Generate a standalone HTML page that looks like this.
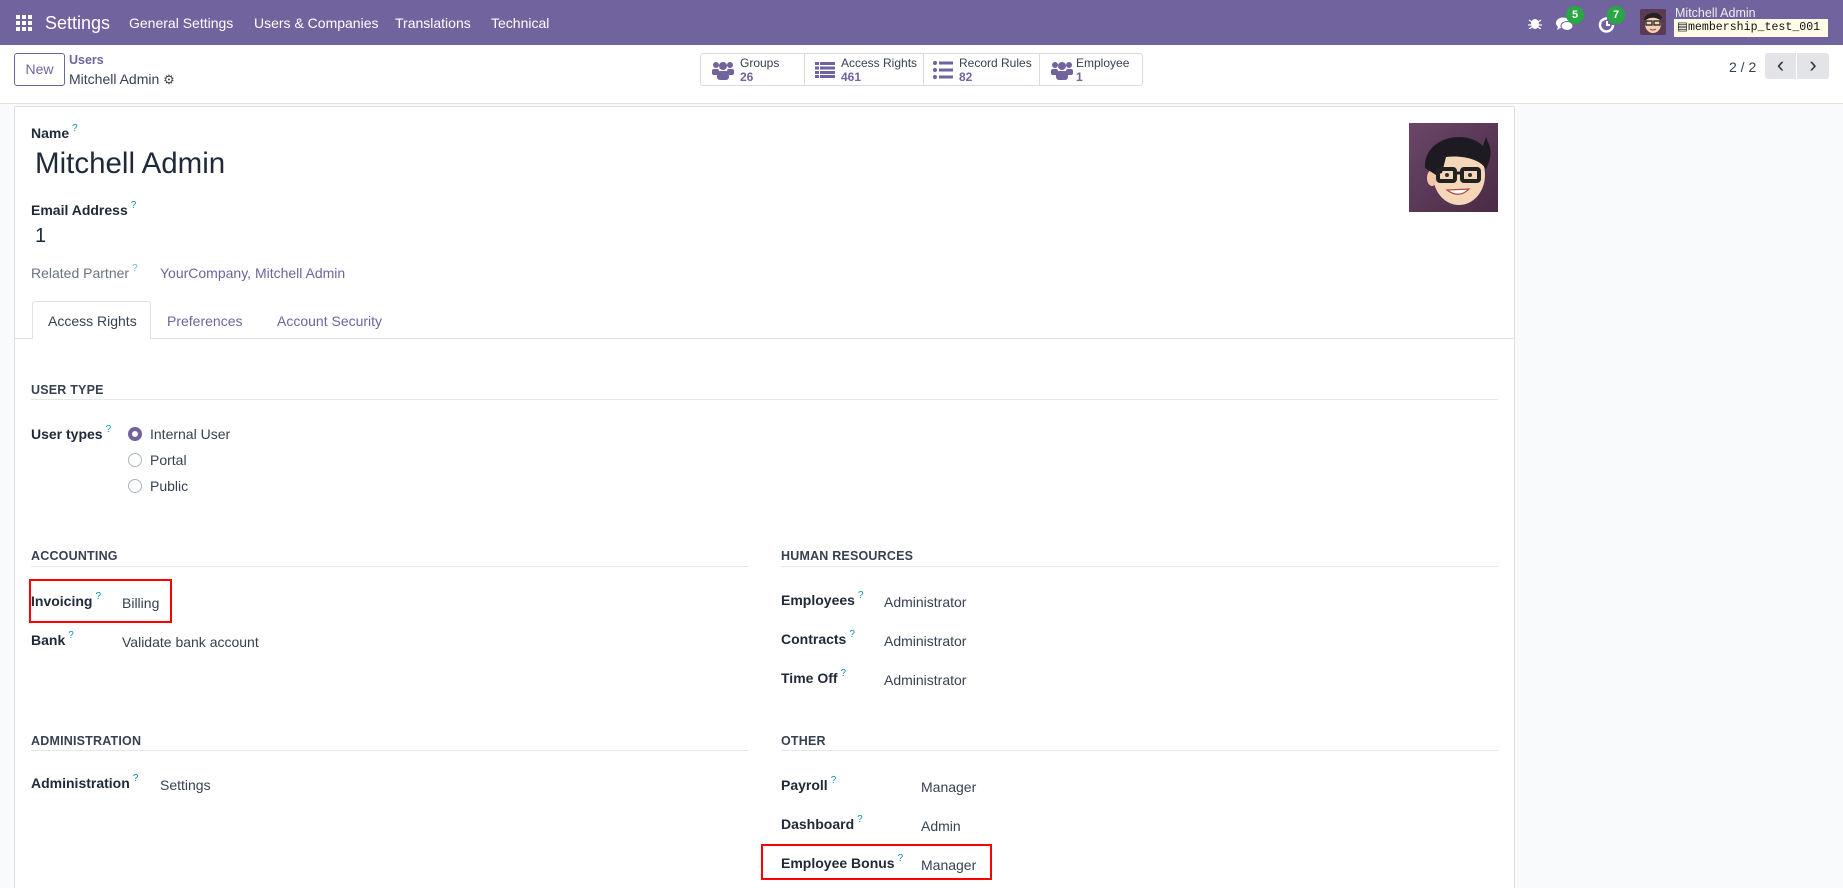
<!DOCTYPE html>
<html><head><meta charset="utf-8"><style>
*{margin:0;padding:0;box-sizing:border-box}
html,body{width:1843px;height:888px;overflow:hidden}
body{background:#f9fafb;font-family:"Liberation Sans",sans-serif;color:#374151;position:relative;font-size:14px}
.a{position:absolute;white-space:nowrap;line-height:20px;height:20px}
.nav{position:absolute;left:0;top:0;width:1843px;height:45px;background:#71639e}
.nav .a{color:#fff}
.cp{position:absolute;left:0;top:45px;width:1843px;height:59px;background:#fff;border-bottom:1px solid #dee2e6}
.sheet{position:absolute;left:14px;top:106px;width:1501px;height:800px;background:#fff;border:1px solid #dee2e6}
.lbl{font-weight:bold;color:#1f2937;font-size:14px}
.q{color:#0d8fb0;font-size:10px;vertical-align:top;position:relative;top:-4px;margin-left:3px;font-weight:normal}
.val{color:#374151;font-size:14px}
.hdr{font-weight:bold;font-size:12.5px;color:#374151;letter-spacing:.2px}
.line{position:absolute;height:1px;background:#e5e7eb}
.radio{position:absolute;width:14px;height:14px;border-radius:50%;border:1px solid #adb5bd;background:#fff}
.red{position:absolute;border:2px solid #f00}
.stat{position:absolute;top:53px;height:33px;border:1px solid #d8dadd;border-radius:3px;left:700px;width:443px}
.st{position:absolute;font-size:12px;color:#374151;line-height:14px}
.st b{color:#71639e;display:block}
</style></head><body>
<div class="nav">
  <svg style="position:absolute;left:16px;top:15px" width="16" height="16"><g fill="#fff"><rect x="0" y="0" width="4" height="4"/><rect x="6" y="0" width="4" height="4"/><rect x="12" y="0" width="4" height="4"/><rect x="0" y="6" width="4" height="4"/><rect x="6" y="6" width="4" height="4"/><rect x="12" y="6" width="4" height="4"/><rect x="0" y="12" width="4" height="4"/><rect x="6" y="12" width="4" height="4"/><rect x="12" y="12" width="4" height="4"/></g></svg>
  <div class="a" style="left:45px;top:12px;font-size:18px;line-height:22px">Settings</div>
  <div class="a" style="left:129px;top:13px;font-size:14px">General Settings</div>
  <div class="a" style="left:254px;top:13px;font-size:14px">Users &amp; Companies</div>
  <div class="a" style="left:395px;top:13px;font-size:14px">Translations</div>
  <div class="a" style="left:491px;top:13px;font-size:14px">Technical</div>
  <svg style="position:absolute;left:1528px;top:17px" width="14" height="12"><ellipse cx="7" cy="7" rx="4" ry="5" fill="#fff"/><path d="M1 3l3 2M13 3l-3 2M0 8h3M14 8h-3M1 12l3-2M13 12l-3-2" stroke="#fff" stroke-width="1.3"/></svg>
  <svg style="position:absolute;left:1555px;top:16px" width="20" height="17"><ellipse cx="8" cy="7" rx="7" ry="5.5" fill="#fff"/><path d="M3 10l-1 4 5-3z" fill="#fff"/><ellipse cx="12" cy="10" rx="6" ry="4.5" fill="#fff" stroke="#71639e" stroke-width="1"/></svg>
  <div style="position:absolute;left:1566px;top:6px;width:18px;height:18px;border-radius:9px;background:#28a745;color:#fff;font-size:11px;text-align:center;line-height:18px;font-weight:bold">5</div>
  <svg style="position:absolute;left:1598px;top:16px" width="18" height="18"><path d="M15 9A6.5 6.5 0 1 1 9 2.5" stroke="#fff" stroke-width="2.5" fill="none"/><path d="M9 5v4h3" stroke="#fff" stroke-width="2" fill="none"/></svg>
  <div style="position:absolute;left:1607px;top:6px;width:18px;height:18px;border-radius:9px;background:#28a745;color:#fff;font-size:11px;text-align:center;line-height:18px;font-weight:bold">7</div>
  <svg style="position:absolute;left:1640px;top:9px" width="26" height="26"><rect width="26" height="26" rx="2" fill="#5b3a55"/><ellipse cx="13" cy="15" rx="8" ry="9" fill="#f5d3b5"/><path d="M4 11c0-8 16-10 18-2l-2 2c-4-3-10-3-14 0z" fill="#222"/><rect x="6" y="12" width="6" height="4" fill="none" stroke="#222" stroke-width="1.3"/><rect x="14" y="12" width="6" height="4" fill="none" stroke="#222" stroke-width="1.3"/><path d="M10 20q3 2 6 0" stroke="#a33" fill="none"/></svg>
  <div class="a" style="left:1675px;top:3px;font-size:12.5px;color:#eee">Mitchell Admin</div>
  <div style="position:absolute;left:1674px;top:19px;width:154px;height:18px;background:#fffbe6;color:#111;font-family:'Liberation Mono',monospace;font-size:11.6px;line-height:18px;padding-left:3px;white-space:nowrap;overflow:hidden">▤membership_test_001</div>
</div>
<div class="cp">
  <div style="position:absolute;left:14px;top:8px;width:51px;height:33px;border:1px solid #71639e;border-radius:3px;color:#71639e;font-size:14px;text-align:center;line-height:31px">New</div>
  <div class="a" style="left:69px;top:5px;font-size:12.5px;color:#71639e;font-weight:bold">Users</div>
  <div class="a" style="left:69px;top:24px;font-size:14px;color:#374151">Mitchell Admin <span style="font-size:13px;color:#444">⚙</span></div>
  <div class="a" style="left:1729px;top:12px;font-size:14px">2 / 2</div>
  <div style="position:absolute;left:1765px;top:8px;width:31px;height:26px;background:#e2e4e8;border-radius:3px 0 0 3px;text-align:center;line-height:24px;font-size:22px;color:#333">&#x2039;</div>
  <div style="position:absolute;left:1797px;top:8px;width:32px;height:26px;background:#e2e4e8;border-radius:0 3px 3px 0;text-align:center;line-height:24px;font-size:22px;color:#333">&#x203A;</div>
</div>
<div class="stat">
  <div style="position:absolute;left:103px;top:0;width:1px;height:31px;background:#d8dadd"></div>
  <div style="position:absolute;left:222px;top:0;width:1px;height:31px;background:#d8dadd"></div>
  <div style="position:absolute;left:338px;top:0;width:1px;height:31px;background:#d8dadd"></div>
  <svg style="position:absolute;left:11px;top:6px" width="22" height="20"><g fill="#71639e"><circle cx="4" cy="5" r="3"/><circle cx="18" cy="5" r="3"/><circle cx="11" cy="6" r="4"/><rect x="0" y="9" width="7" height="6" rx="2"/><rect x="15" y="9" width="7" height="6" rx="2"/><rect x="5" y="11" width="12" height="9" rx="3"/></g></svg>
  <div class="st" style="left:39px;top:2px">Groups<b>26</b></div>
  <svg style="position:absolute;left:114px;top:8px" width="20" height="16"><g fill="#71639e"><rect x="0" y="0" width="4" height="3"/><rect x="5" y="0" width="15" height="3"/><rect x="0" y="4.5" width="4" height="3"/><rect x="5" y="4.5" width="15" height="3"/><rect x="0" y="9" width="4" height="3"/><rect x="5" y="9" width="15" height="3"/><rect x="0" y="13" width="4" height="3"/><rect x="5" y="13" width="15" height="3"/></g></svg>
  <div class="st" style="left:140px;top:2px">Access Rights<b>461</b></div>
  <svg style="position:absolute;left:232px;top:7px" width="20" height="18"><g fill="#71639e"><circle cx="2" cy="2" r="2"/><rect x="6" y="0.5" width="14" height="3"/><circle cx="2" cy="9" r="2"/><rect x="6" y="7.5" width="14" height="3"/><circle cx="2" cy="16" r="2"/><rect x="6" y="14.5" width="14" height="3"/></g></svg>
  <div class="st" style="left:258px;top:2px">Record Rules<b>82</b></div>
  <svg style="position:absolute;left:350px;top:6px" width="22" height="20"><g fill="#71639e"><circle cx="4" cy="5" r="3"/><circle cx="18" cy="5" r="3"/><circle cx="11" cy="6" r="4"/><rect x="0" y="9" width="7" height="6" rx="2"/><rect x="15" y="9" width="7" height="6" rx="2"/><rect x="5" y="11" width="12" height="9" rx="3"/></g></svg>
  <div class="st" style="left:375px;top:2px">Employee<b>1</b></div>
</div>
<div class="sheet"></div>
<div class="a lbl" style="left:31px;top:123px">Name<span class="q">?</span></div>
<div class="a" style="left:35px;top:146px;height:36px;line-height:36px;font-size:29.5px;color:#1f2937">Mitchell Admin</div>
<svg style="position:absolute;left:1409px;top:123px" width="89" height="89"><defs><linearGradient id="g" x1="0" y1="0" x2="1" y2="1"><stop offset="0" stop-color="#6b4668"/><stop offset="1" stop-color="#4a2a45"/></linearGradient></defs><rect width="89" height="89" fill="url(#g)"/><ellipse cx="50" cy="52" rx="26" ry="30" fill="#f6d6b8"/><ellipse cx="23" cy="55" rx="5" ry="8" fill="#f0c8a8"/><path d="M16 45c-2-30 40-40 58-22l3-9 4 10c2 10-2 18-4 22-6-10-24-14-40-12l-4 16-6 2z" fill="#1d1a22"/><rect x="29" y="46" width="17" height="12" rx="2" fill="none" stroke="#222" stroke-width="4"/><rect x="53" y="46" width="17" height="12" rx="2" fill="none" stroke="#222" stroke-width="4"/><path d="M46 50h7" stroke="#222" stroke-width="3"/><circle cx="38" cy="52" r="2" fill="#333"/><circle cx="61" cy="52" r="2" fill="#333"/><path d="M38 67q12 9 22-1z" fill="#fff" stroke="#a44" stroke-width="1.2"/></svg>
<div class="a lbl" style="left:31px;top:200px">Email Address<span class="q">?</span></div>
<div class="a" style="left:35px;top:224px;font-size:20px;line-height:24px;height:24px;color:#1f2937">1</div>
<div class="a" style="left:31px;top:263px;color:#6b7280">Related Partner<span class="q" style="color:#6bb8d0">?</span></div>
<div class="a" style="left:160px;top:263px;color:#71639e">YourCompany, Mitchell Admin</div>
<div class="line" style="left:15px;top:338px;width:1499px;background:#dee2e6"></div>
<div style="position:absolute;left:32px;top:301px;width:119px;height:38px;background:#fff;border:1px solid #dee2e6;border-bottom:none;border-radius:3px 3px 0 0"></div>
<div class="a" style="left:48px;top:311px;color:#374151">Access Rights</div>
<div class="a" style="left:167px;top:311px;color:#71639e">Preferences</div>
<div class="a" style="left:277px;top:311px;color:#71639e">Account Security</div>

<div class="a hdr" style="left:31px;top:380px">USER TYPE</div>
<div class="line" style="left:31px;top:399px;width:1467px"></div>
<div class="a lbl" style="left:31px;top:424px">User types<span class="q">?</span></div>
<div class="radio" style="left:128px;top:427px;border:4px solid #71639e"></div>
<div class="a" style="left:150px;top:424px">Internal User</div>
<div class="radio" style="left:128px;top:453px"></div>
<div class="a" style="left:150px;top:450px">Portal</div>
<div class="radio" style="left:128px;top:479px"></div>
<div class="a" style="left:150px;top:476px">Public</div>

<div class="a hdr" style="left:31px;top:546px">ACCOUNTING</div>
<div class="line" style="left:31px;top:566px;width:717px"></div>
<div class="red" style="left:29px;top:579px;width:143px;height:44px"></div>
<div class="a lbl" style="left:31px;top:591px">Invoicing<span class="q">?</span></div>
<div class="a val" style="left:122px;top:593px">Billing</div>
<div class="a lbl" style="left:31px;top:630px">Bank<span class="q">?</span></div>
<div class="a val" style="left:122px;top:632px">Validate bank account</div>

<div class="a hdr" style="left:31px;top:731px">ADMINISTRATION</div>
<div class="line" style="left:31px;top:750px;width:717px"></div>
<div class="a lbl" style="left:31px;top:773px">Administration<span class="q">?</span></div>
<div class="a val" style="left:160px;top:775px">Settings</div>

<div class="a hdr" style="left:781px;top:546px">HUMAN RESOURCES</div>
<div class="line" style="left:781px;top:566px;width:717px"></div>
<div class="a lbl" style="left:781px;top:590px">Employees<span class="q">?</span></div>
<div class="a val" style="left:884px;top:592px">Administrator</div>
<div class="a lbl" style="left:781px;top:629px">Contracts<span class="q">?</span></div>
<div class="a val" style="left:884px;top:631px">Administrator</div>
<div class="a lbl" style="left:781px;top:668px">Time Off<span class="q">?</span></div>
<div class="a val" style="left:884px;top:670px">Administrator</div>

<div class="a hdr" style="left:781px;top:731px">OTHER</div>
<div class="line" style="left:781px;top:750px;width:717px"></div>
<div class="a lbl" style="left:781px;top:775px">Payroll<span class="q">?</span></div>
<div class="a val" style="left:921px;top:777px">Manager</div>
<div class="a lbl" style="left:781px;top:814px">Dashboard<span class="q">?</span></div>
<div class="a val" style="left:921px;top:816px">Admin</div>
<div class="red" style="left:761px;top:844px;width:231px;height:36px"></div>
<div class="a lbl" style="left:781px;top:853px">Employee Bonus<span class="q">?</span></div>
<div class="a val" style="left:921px;top:855px">Manager</div>
</body></html>
